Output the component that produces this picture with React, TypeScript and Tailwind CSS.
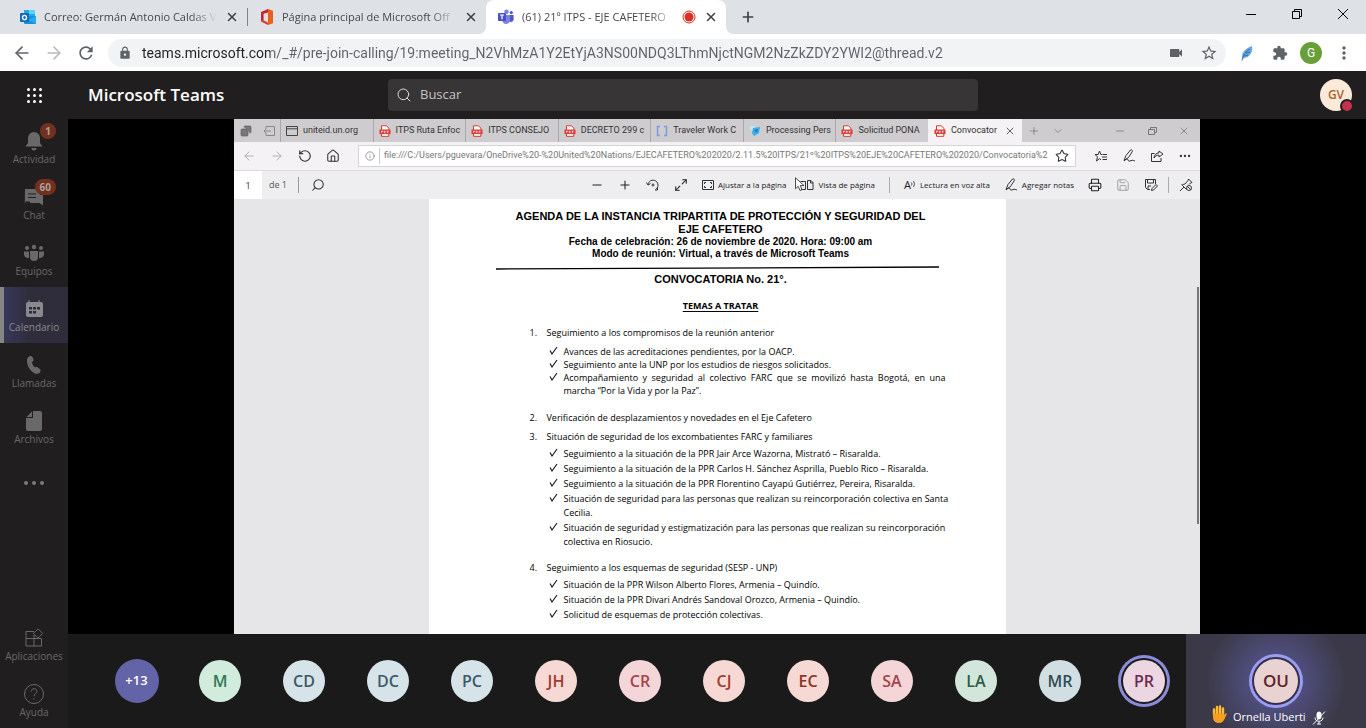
import { ReactNode } from 'react';
import {
  ArrowLeft,
  ArrowRight,
  ChevronDown,
  Copy,
  Ellipsis,
  House,
  Info,
  Maximize2,
  Minus,
  Plus,
  Printer,
  RotateCw,
  Save,
  Search,
  Star,
  X,
} from 'lucide-react';
import { MdExtension, MdLock, MdMoreVert, MdRefresh, MdStarBorder, MdVideocam } from 'react-icons/md';

const edgeTabs = [
  { title: 'uniteid.un.org', icon: 'page' },
  { title: 'ITPS Ruta Enfoc', icon: 'pdf' },
  { title: 'ITPS CONSEJO', icon: 'pdf' },
  { title: 'DECRETO 299 c', icon: 'pdf' },
  { title: 'Traveler Work C', icon: 'brackets' },
  { title: 'Processing Pers', icon: 'blue' },
  { title: 'Solicitud PONA', icon: 'pdf' },
];

const participants = [
  { initials: 'M', color: 'bg-[#d1ebdd] text-[#2f7a55]' },
  { initials: 'CD', color: 'bg-[#d6e3e8] text-[#3b5a66]' },
  { initials: 'DC', color: 'bg-[#d6e3e8] text-[#3b5a66]' },
  { initials: 'PC', color: 'bg-[#d6e3e8] text-[#3b5a66]' },
  { initials: 'JH', color: 'bg-[#f6d9d5] text-[#a33a2c]' },
  { initials: 'CR', color: 'bg-[#f4d6d8] text-[#a6434c]' },
  { initials: 'CJ', color: 'bg-[#f6d9d5] text-[#a33a2c]' },
  { initials: 'EC', color: 'bg-[#f6d9d5] text-[#8f3325]' },
  { initials: 'SA', color: 'bg-[#f4d6d8] text-[#a6434c]' },
  { initials: 'LA', color: 'bg-[#d3e6dc] text-[#2e5c48]' },
  { initials: 'MR', color: 'bg-[#d2dfe2] text-[#2f4d55]' },
];

const topics = [
  {
    title: 'Seguimiento a los compromisos de la reunión anterior',
    points: [
      'Avances de las acreditaciones pendientes, por la OACP.',
      'Seguimiento ante la UNP por los estudios de riesgos solicitados.',
      'Acompañamiento y seguridad al colectivo FARC que se movilizó hasta Bogotá, en una marcha “Por la Vida y por la Paz”.',
    ],
    dense: true,
    space: 'mt-3.5',
  },
  {
    title: 'Verificación de desplazamientos y novedades en el Eje Cafetero',
    points: [],
    space: 'mt-3.5',
  },
  {
    title: 'Situación de seguridad de los excombatientes FARC y familiares',
    points: [
      'Seguimiento a la situación de la PPR Jair Arce Wazorna, Mistrató – Risaralda.',
      'Seguimiento a la situación de la PPR Carlos H. Sánchez Asprilla, Pueblo Rico – Risaralda.',
      'Seguimiento a la situación de la PPR Florentino Cayapú Gutiérrez, Pereira, Risaralda.',
      'Situación de seguridad para las personas que realizan su reincorporación colectiva en Santa Cecilia.',
      'Situación de seguridad y estigmatización para las personas que realizan su reincorporación colectiva en Riosucio.',
    ],
    space: 'mt-1.5',
  },
  {
    title: 'Seguimiento a los esquemas de seguridad (SESP - UNP)',
    points: [
      'Situación de la PPR Wilson Alberto Flores, Armenia – Quindío.',
      'Situación de la PPR Divari Andrés Sandoval Orozco, Armenia – Quindío.',
      'Solicitud de esquemas de protección colectivas.',
    ],
    space: 'mt-3',
  },
];

const OutlookIcon = () => (
  <svg viewBox="0 0 16 16" className="size-4 shrink-0">
    <path d="M4 1h11v6H4z" fill="#28a8ea" />
    <path d="M9 1h6v4H9z" fill="#50d9ff" />
    <path d="M4 7h12v8H5a1 1 0 0 1-1-1z" fill="#1490df" />
    <path d="M16 7v8l-8-4z" fill="#28a8ea" />
    <rect y="4" width="9" height="9" rx="1" fill="#0f6cbd" />
    <ellipse cx="4.5" cy="8.5" rx="2" ry="2.2" fill="none" stroke="#fff" strokeWidth="1.3" />
  </svg>
);

const OfficeIcon = () => (
  <svg viewBox="0 0 14 16" className="h-4 w-3.5 shrink-0">
    <path d="M8 0L1 3v9.500l2.600-1.300V4.800L8 3.600z" fill="#c9242b" />
    <path d="M1 12.500L8 16v-2.200l-4.400-2.600z" fill="#d93a20" />
    <path d="M8 0l5 1.700v12.600L8 16z" fill="#e8601c" />
  </svg>
);

const TeamsIcon = () => (
  <svg viewBox="0 0 16 16" className="size-4 shrink-0">
    <circle cx="8.5" cy="2.8" r="2.3" fill="#7b83eb" />
    <circle cx="13.3" cy="3.6" r="1.6" fill="#5059c9" />
    <path d="M11 6h4.6v4.5a2.5 2.5 0 0 1-4.6 1.3z" fill="#5059c9" />
    <path d="M4.500 6h7.500v6a4 4 0 0 1-7.500.8z" fill="#7b83eb" />
    <rect y="4" width="8" height="8" rx=".8" fill="#4b53bc" />
    <path d="M2 6h4M4 6v4.300" stroke="#fff" strokeWidth="1.200" />
  </svg>
);

const PdfIcon = () => (
  <svg viewBox="0 0 12 12" className="size-3 shrink-0">
    <path d="M2.500 5V.8h5l2.300 2.400V5M2.500 9v2.300h7.300V9" fill="#fff" stroke="#d33a35" />
    <rect x=".5" y="4.500" width="11" height="4.600" fill="#dc3b36" />
    <path d="M2.500 7.800V6h1.200v1M5.300 6v1.700h.8l.5-.8-.5-.8zM8.300 7.900V6H9.800M8.300 7h1.200" fill="none" stroke="#fff" strokeWidth=".6" />
  </svg>
);

const TabIcon = ({ type }: { type: string }) => {
  if (type === 'pdf') return <PdfIcon />;
  return (
    <svg viewBox="0 0 12 12" className="size-3 shrink-0" fill="none">
      {type === 'page' && <path d="M.5 1.500h11v9H.5zM.5 3.800h11" stroke="#444" />}
      {type === 'brackets' && <path d="M4 1.500H1.500v9H4M8 1.500h2.500v9H8" stroke="#7c9be0" strokeWidth="1.500" />}
      {type === 'blue' && (
        <>
          <path d="M1 1h5v4H1z" fill="#bfe6f7" />
          <path d="M4 3l7-1-1 6-5 3-2-3z" fill="#3aaee6" />
          <path d="M5 5l4-1-1 4z" fill="#1580c4" />
        </>
      )}
    </svg>
  );
};

const PenIcon = () => (
  <svg viewBox="0 0 14 14" className="size-3.5 shrink-0" fill="none" stroke="#333">
    <path d="M2 11.500L4 6.500 8.500 1c.8-.6 2.400.4 1.800 1.500L6.500 8.500z M2 12c2-2 4-2.500 4-1.200s1.500 1.700 3 .8 3 .2 4 .4" />
  </svg>
);

const ChromeTab = ({ icon, title }: { icon: ReactNode; title: string }) => (
  <>
    {icon}
    <span className="flex-1 whitespace-nowrap mask-r-from-85% mask-r-to-100%">{title}</span>
  </>
);

const CloseTab = () => (
  <button aria-label="Cerrar pestaña" className="shrink-0">
    <X className="size-3.5 text-[#3c4043]" strokeWidth={2.5} />
  </button>
);

const ChromeBar = () => (
  <header className="bg-[#dee1e6] text-[#45494d]">
    <div className="flex h-[34px] text-[11px]">
      <div className="flex w-[247px] items-center gap-2 pr-2 pl-5">
        <ChromeTab icon={<OutlookIcon />} title="Correo: Germán Antonio Caldas V" />
        <CloseTab />
      </div>
      <div className="my-2 w-px bg-[#808388]" />
      <div className="flex w-[238px] items-center gap-2 pr-2 pl-3">
        <ChromeTab icon={<OfficeIcon />} title="Página principal de Microsoft Off" />
        <CloseTab />
      </div>
      <div className="relative flex w-60 items-center gap-2 rounded-t-lg bg-white pr-2 pl-3">
        <span className="absolute bottom-0 -left-2 size-2 bg-[radial-gradient(circle_at_0_0,transparent_8px,#fff_8px)]" />
        <span className="absolute -right-2 bottom-0 size-2 bg-[radial-gradient(circle_at_100%_0,transparent_8px,#fff_8px)]" />
        <ChromeTab icon={<TeamsIcon />} title="(61) 21º ITPS - EJE CAFETERO" />
        <svg viewBox="0 0 14 14" className="size-3.5 shrink-0">
          <circle cx="7" cy="7" r="6" fill="#fff" stroke="#d93025" />
          <circle cx="7" cy="7" r="4.500" fill="#d93025" />
        </svg>
        <CloseTab />
      </div>
      <button aria-label="Nueva pestaña" className="ml-3.5">
        <Plus className="size-4 text-[#3c4043]" strokeWidth={2.5} />
      </button>
      <div className="ml-auto flex h-7 text-black">
        <button aria-label="Minimizar" className="flex w-[46px] items-center justify-center">
          <svg viewBox="0 0 10 10" className="size-2.5"><path d="M0 5.500h10" stroke="currentColor" /></svg>
        </button>
        <button aria-label="Restaurar" className="flex w-[46px] items-center justify-center">
          <svg viewBox="0 0 10 10" className="size-2.5" fill="none" stroke="currentColor"><path d="M.5 2.500h7v7h-7zM2.500 2.500v-2h7v7h-2" /></svg>
        </button>
        <button aria-label="Cerrar" className="flex w-[46px] items-center justify-center">
          <svg viewBox="0 0 10 10" className="size-2.5"><path d="M0 0l10 10M10 0L0 10" stroke="currentColor" /></svg>
        </button>
      </div>
    </div>
    <div className="flex h-[37px] items-center bg-white px-3 text-[#5f6368]">
      <button aria-label="Atrás" className="mr-3"><ArrowLeft className="size-5" /></button>
      <button aria-label="Adelante" className="mr-3"><ArrowRight className="size-5 text-[#b9bbbe]" /></button>
      <button aria-label="Recargar" className="mr-3"><MdRefresh className="size-5" /></button>
      <div className="flex h-7 flex-1 items-center rounded-full bg-[#f1f3f4] pr-2 pl-2.5">
        <MdLock className="mr-2.5 size-3.5" />
        <input
          aria-label="Dirección"
          defaultValue="teams.microsoft.com/_#/pre-join-calling/19:meeting_N2VhMzA1Y2EtYjA3NS00NDQ3LThmNjctNGM2NzZkZDY2YWI2@thread.v2"
          className="min-w-0 flex-1 bg-[linear-gradient(to_right,#202124_128px,#5f6368_128px)] bg-clip-text font-['Roboto',sans-serif] text-sm text-transparent outline-none"
        />
        <MdVideocam className="mr-4 size-4" />
        <MdStarBorder className="size-[18px]" />
      </div>
      <svg viewBox="0 0 14 16" className="ml-3.5 h-4 w-3.5">
        <path d="M3 14C0 9 5 3 12 1c1 5-1 11-8 12z" fill="#6aa9d9" />
        <path d="M2 15.500C3 10 6 6 10 4M4 11l4-1M6 8l4-1" stroke="#2f6fae" fill="none" />
      </svg>
      <MdExtension className="ml-[18px] size-4" />
      <span className="ml-3 flex size-[22px] items-center justify-center rounded-full bg-[#689f38] font-['Roboto',sans-serif] text-xs text-white">G</span>
      <button aria-label="Menú" className="ml-3"><MdMoreVert className="size-5" /></button>
    </div>
  </header>
);

const TeamsHeader = () => (
  <div className="flex h-12 items-center bg-[#201e1f]">
    <button aria-label="Aplicaciones de Microsoft 365" className="grid w-[68px] grid-cols-[repeat(3,3px)] justify-center gap-[3px]">
      {Array.from({ length: 9 }, (_, i) => (
        <span key={i} className="size-[3px] rounded-full bg-white" />
      ))}
    </button>
    <h1 className="w-[320px] pl-5 text-[17px] font-semibold text-white">Microsoft Teams</h1>
    <label className="flex h-8 w-[590px] items-center gap-2 rounded-sm bg-[#373536] px-2">
      <Search className="size-4 text-[#dedede]" strokeWidth={1.5} />
      <input aria-label="Buscar" placeholder="Buscar" className="flex-1 bg-transparent text-[13px] outline-none placeholder:text-[#c4c3c3]" />
    </label>
    <div className="relative mr-3.5 ml-auto flex size-8 items-center justify-center rounded-full bg-[#fde9d9] text-xs font-semibold text-[#a0672f]">
      GV
      <span className="absolute -right-0.5 -bottom-0.5 size-3.5 rounded-full border-2 border-[#201e1f] bg-[#c4314b]" />
    </div>
  </div>
);

const SideItem = ({ label, badge, active, children }: { label: string; badge?: string; active?: boolean; children: ReactNode }) => (
  <a
    href="#"
    className={
      active
        ? 'flex h-14 flex-col items-center border-l-4 border-[#858585] bg-[linear-gradient(to_right,#37375a,#2f2d3b_40%)] pt-3 pr-1 text-[#8a8a8d]'
        : 'flex h-14 flex-col items-center pt-3 text-[#6a696a]'
    }
  >
    <span className="relative">
      <svg viewBox="0 0 20 20" className="size-5" fill="currentColor">{children}</svg>
      {badge && (
        <span className="absolute -top-2 -right-3 rounded-full bg-[#74301f] px-[5px] text-[10px] leading-4 font-bold text-[#a9a09e]">
          {badge}
        </span>
      )}
    </span>
    <span className="text-[10px] leading-4">{label}</span>
  </a>
);

const Sidebar = () => (
  <nav className="flex w-[68px] shrink-0 flex-col bg-[#201e1f]">
    <SideItem label="Actividad" badge="1">
      <path d="M10 1a6 6 0 0 1 6 6v5l2.500 3.500h-17L4 12V7a6 6 0 0 1 6-6zM7.500 17h5a2.500 2.500 0 0 1-5 0z" />
    </SideItem>
    <SideItem label="Chat" badge="60">
      <path d="M1 2h14a1 1 0 0 1 1 1v5h3v10.500L15.500 16H6v-1.500H1.500L.8 17z" />
      <path d="M4 7h8M4 10.500h8" stroke="#201e1f" />
    </SideItem>
    <SideItem label="Equipos">
      <circle cx="3" cy="5" r="2" />
      <circle cx="10" cy="4" r="2.2" />
      <circle cx="17" cy="5" r="2" />
      <path d="M0 8.500h5v6.800C1.500 15 0 13.500 0 11zM15 8.500h5V11c0 2.500-1.500 4-5 4.300z" />
      <path d="M6 8h8v6a4 4 0 0 1-8 0z" />
    </SideItem>
    <SideItem label="Calendario" active>
      <path d="M4.500 1h1v2h9V1h1v2h1.500a2 2 0 0 1 2 2v11a2 2 0 0 1-2 2H4a2 2 0 0 1-2-2V5a2 2 0 0 1 2-2h.5z" />
      <path d="M5 8h3v2.500H5zM9 8h3v2.500H9zM13 8h3v2.500h-3zM5 12h3v2.500H5zM9 12h3v2.500H9z" fill="#2f2d3b" />
    </SideItem>
    <SideItem label="Llamadas">
      <path d="M5.500 1.200c1.500-.6 2.800 0 3.300 1.300l.6 1.800c.3 1-.1 1.800-1.500 3 .4 2 1.500 3.800 3 5.200 1.700-.7 2.500-.5 3.300.2l1.800 1.500c.9.9.8 2-.2 3.200-1.300 1.700-3.500 2-6 .5C5.500 15 3 10.500 3 5.800c0-2.400.8-4 2.500-4.600z" />
    </SideItem>
    <SideItem label="Archivos">
      <path d="M9 0h7a2 2 0 0 1 2 2v16a2 2 0 0 1-2 2H4a2 2 0 0 1-2-2V7h7zM8 .5V6H2.500z" />
    </SideItem>
    <button aria-label="Más aplicaciones" className="flex h-14 items-center justify-center gap-1">
      <span className="size-1 rounded-full bg-[#7a797a]" />
      <span className="size-1 rounded-full bg-[#7a797a]" />
      <span className="size-1 rounded-full bg-[#7a797a]" />
    </button>
    <div className="mt-auto">
      <SideItem label="Aplicaciones">
        <path d="M10 3.500H2V18h15.500v-7.500H2M10 7V18M14 .8l4.700 4.700-4.700 4.700-4.700-4.700z" fill="none" stroke="currentColor" />
      </SideItem>
      <SideItem label="Ayuda">
        <circle cx="10" cy="10" r="9.5" fill="none" stroke="currentColor" />
        <path d="M7.300 7.500c0-1.800 1.200-2.800 2.800-2.800s2.700 1 2.700 2.500c0 2.300-2.700 2.300-2.700 5M10 14.200v1.500" fill="none" stroke="currentColor" />
      </SideItem>
    </div>
  </nav>
);

const EdgeChrome = () => (
  <div className="text-[9px] text-[#333]">
    <div className="flex h-[23px] bg-[#cfcccf] font-['Roboto',sans-serif]">
      <div className="flex w-[46px] items-center justify-around text-[#666]">
        <Copy className="size-3 -scale-x-100" fill="#777" strokeWidth={1.5} />
        <svg viewBox="0 0 12 12" className="size-3" fill="none" stroke="#888"><path d="M3 4V1.500h8.500v9H3V8M8 6H1M3 4L1 6l2 2" /></svg>
      </div>
      <div className="flex w-[648px]">
        {edgeTabs.map((tab) => (
          <div key={tab.title} className="flex flex-1 items-center gap-[5px] border-l border-[#a9a7a9] pl-[5px] whitespace-nowrap">
            <TabIcon type={tab.icon} />
            {tab.title}
          </div>
        ))}
      </div>
      <div className="flex w-[94px] items-center gap-[5px] bg-[#f4f2f4] px-1.5 whitespace-nowrap">
        <PdfIcon />
        <span className="flex-1">Convocator</span>
        <X className="size-3 shrink-0" strokeWidth={1.5} />
      </div>
      <div className="flex items-center gap-3 pl-1.5 text-[#777]">
        <Plus className="size-3" strokeWidth={1.5} />
        <ChevronDown className="size-3" strokeWidth={1.5} />
      </div>
      <div className="ml-auto flex items-center gap-5 pr-2.5 text-[#777]">
        <Minus className="size-3" strokeWidth={1.5} />
        <svg viewBox="0 0 12 12" className="size-3" fill="none" stroke="#777"><path d="M2.500 4.500h6v5h-6zM4.500 4.500v-2h6v5h-2" /></svg>
        <X className="size-3" strokeWidth={1.5} />
      </div>
    </div>
    <div className="flex h-7 items-center bg-[#f4f2f4] px-2">
      <ArrowLeft className="mr-3.5 size-3.5 text-[#aaa]" strokeWidth={1.5} />
      <ArrowRight className="mr-3.5 size-3.5 text-[#aaa]" strokeWidth={1.5} />
      <RotateCw className="mr-3.5 size-3.5 -scale-x-100" strokeWidth={2} />
      <House className="mr-4.5 size-3.5" strokeWidth={1.8} />
      <div className="flex h-[22px] min-w-0 flex-1 items-center border border-[#d5d3d5] bg-white px-1.5">
        <Info className="size-2.5 shrink-0 text-[#888]" strokeWidth={2} />
        <span className="mx-1 h-4 w-px bg-[#ccc]" />
        <input
          aria-label="Dirección del documento"
          defaultValue="file:///C:/Users/pguevara/OneDrive%20-%20United%20Nations/EJECAFETERO%202020/2.11.5%20ITPS/21º%20ITPS%20EJE%20CAFETERO%202020/Convocatoria%2"
          className="min-w-0 flex-1 bg-transparent font-['Roboto',sans-serif] text-[#777] outline-none"
        />
        <Star className="ml-1 size-3.5 shrink-0" strokeWidth={1.8} />
      </div>
      <div className="ml-4.5 flex items-center gap-3.5">
        <svg viewBox="0 0 14 14" className="size-3.5" fill="none" stroke="#333">
          <path d="M8 5.500H6.800L5.500 2 4.200 5.500H1l2.500 2.300L2.500 12l3-2.300L7 10.800M8.500 5.500H13M8 8h5M8.500 10.500H13" />
        </svg>
        <PenIcon />
        <svg viewBox="0 0 14 14" className="size-3.5" fill="none" stroke="#333">
          <path d="M4.500 4.500h-3v8h9.500V9M9 2l4 3-4 3V6.200C6.500 6 5 7.200 4 9c.2-3 2-5 5-5.200z" />
        </svg>
        <Ellipsis className="size-3.5" strokeWidth={2} />
      </div>
    </div>
    <div className="relative flex h-[29px] items-center border-t border-[#dcdadc] bg-[#eeedf0] pr-[7px]">
      <input aria-label="Página" defaultValue="1" className="h-full w-7 bg-white text-center outline-none" />
      <span className="w-8 text-center text-[#555]">de 1</span>
      <span className="ml-1 h-4 w-px bg-[#999]" />
      <Search className="ml-3 size-3.5 -scale-x-100" strokeWidth={1.8} />
      <div className="ml-auto flex items-center gap-3.5 text-[8px] text-[#222]">
        <button aria-label="Alejar"><Minus className="size-3.5" strokeWidth={1.8} /></button>
        <button aria-label="Acercar"><Plus className="size-3.5" strokeWidth={1.8} /></button>
        <button aria-label="Girar">
          <svg viewBox="0 0 14 14" className="size-3.5" fill="none" stroke="#333"><path d="M2 7A5 5 0 1 1 9.500 11.500M.5 4.500L2 7l2.500-1.500M11.500 9v3H9" /><circle cx="7" cy="7" r="1" /></svg>
        </button>
        <button aria-label="Ampliar"><Maximize2 className="size-3.5" strokeWidth={1.8} /></button>
        <button className="flex items-center gap-1">
          <svg viewBox="0 0 12 10" className="h-2.5 w-3" fill="none" stroke="#333"><path d="M.5.5h11v9H.5zM2.500 4V2.500H4M8 2.500h1.500V4M9.500 6v1.500H8M4 7.500H2.500V6" /></svg>
          Ajustar a la página
        </button>
        <button className="flex items-center gap-1">
          <svg viewBox="0 0 14 12" className="h-3 w-3.5" fill="none" stroke="#333"><path d="M.5 2.500h5v8h-5M7.500 1.500h3.500l2 2v7H7.500zM10.500 1.500V4H13" /></svg>
          Vista de página
        </button>
        <span className="h-4 w-px bg-[#aaa]" />
        <button className="flex items-center gap-1">
          <span className="flex items-center" aria-hidden="true">
            <span className="text-[11px] leading-3">A</span>
            <svg viewBox="0 0 5 10" className="h-2.5 w-[5px]" fill="none" stroke="#333" strokeWidth=".8"><path d="M.5 2.500q1 1.500 0 3M2.500 1q2 3 0 6" /></svg>
          </span>
          Lectura en voz alta
        </button>
        <button className="flex items-center gap-1">
          <PenIcon />
          Agregar notas
        </button>
        <button aria-label="Imprimir"><Printer className="size-3.5" strokeWidth={1.8} /></button>
        <button aria-label="Guardar"><Save className="size-3.5 text-[#999]" strokeWidth={1.5} /></button>
        <button aria-label="Guardar como">
          <svg viewBox="0 0 14 14" className="size-3.5" fill="none" stroke="#333">
            <path d="M6 11.500H3.500l-2-2v-8h10V6M3.500 1.500V5h6V1.500M4 11V8h3M7.500 12.500l.5-2L12 6.500 13.500 8l-4 4z" />
          </svg>
        </button>
        <span className="-mx-1 h-4 w-px bg-[#aaa]" />
        <button aria-label="Desanclar">
          <svg viewBox="0 0 14 14" className="size-3.5" fill="none" stroke="#333">
            <path d="M1 13l4-4M2.500 6.500l5 5M3.500 6.500L6 6l3-3.500L9.500 1 13 4.500 11.500 5 10 6.500" />
            <circle cx="10" cy="10" r="2.5" />
            <path d="M8.300 8.300l3.500 3.500" />
          </svg>
        </button>
      </div>
      <svg viewBox="0 0 10 15" className="absolute top-1.5 left-[561px] h-[15px] w-2.5">
        <path d="M.5.8v11l2.700-2.500 1.800 4.200 2-.9-1.800-4H9z" fill="#fff" stroke="#222" strokeWidth=".8" />
      </svg>
    </div>
  </div>
);

const AgendaPage = () => (
  <article className="mx-auto w-[577px] bg-white pt-[11px] pr-[60px] pb-3 pl-[67px] text-black">
    <header className="text-center font-['Liberation_Sans',Arial,sans-serif] font-bold">
      <h2 className="text-[11px] leading-[13px]">
        AGENDA DE LA INSTANCIA TRIPARTITA DE PROTECCIÓN Y SEGURIDAD DEL
        <br />
        EJE CAFETERO
      </h2>
      <p className="text-[10px] leading-3">Fecha de celebración: 26 de noviembre de 2020. Hora: 09:00 am</p>
      <p className="text-[10px] leading-3">Modo de reunión: Virtual, a través de Microsoft Teams</p>
      <svg viewBox="0 0 443 4" className="mt-1.5 h-1 w-[443px]"><path d="M0 3L443 1" stroke="#000" strokeWidth="1.3" /></svg>
      <p className="mt-[3px] text-[11px] leading-[13px]">CONVOCATORIA No. 21°.</p>
    </header>
    <div className="text-[9px] leading-[13px]">
      <h3 className="mt-[13px] text-center font-bold underline underline-offset-2">TEMAS A TRATAR</h3>
      <ol className="pl-[34px]">
        {topics.map((topic, index) => (
          <li key={topic.title} className={topic.space}>
            <div className="flex">
              <span className="w-[17px]">{index + 1}.</span>
              <span>{topic.title}</span>
            </div>
            {topic.points.length > 0 && (
              <ul className={topic.dense ? 'mt-1.5 flex flex-col leading-[13px]' : 'mt-1 flex flex-col gap-px leading-[14px]'}>
                {topic.points.map((point) => (
                  <li key={point} className="flex pl-[19px]">
                    <svg viewBox="0 0 9 12" className="mr-1.5 h-3 w-[9px] shrink-0" fill="none" stroke="#111">
                      <path d="M1 5.500l2 3.500L8 2" strokeWidth="1.1" />
                    </svg>
                    <span className={topic.dense ? 'text-justify' : '-mr-1'}>{point}</span>
                  </li>
                ))}
              </ul>
            )}
          </li>
        ))}
      </ol>
    </div>
  </article>
);

const Participants = () => (
  <div className="flex h-[94px] items-stretch justify-end bg-[#1b1a1b] font-semibold">
    <div className="flex w-[83px] items-center justify-center">
      <button className="size-11 rounded-full bg-[#6264a7] text-[13px] text-white">+13</button>
    </div>
    {participants.map((person, index) => (
      <div key={index} className="flex w-[84px] items-center justify-center">
        <span className={`flex size-[42px] items-center justify-center rounded-full text-base ${person.color}`}>{person.initials}</span>
      </div>
    ))}
    <div className="flex w-[84px] items-center justify-center">
      <span className="flex size-[42px] items-center justify-center rounded-full bg-[#ecd6e2] text-base text-[#6b2b50] ring-3 ring-[#8b8cd9] ring-offset-2 ring-offset-[#1b1a1b]">
        PR
      </span>
    </div>
    <div className="relative flex w-[180px] items-center justify-center bg-[radial-gradient(circle_at_50%_50%,#504f80_24px,#3b3947_70px)]">
      <span className="flex size-11 items-center justify-center rounded-full bg-[#e9d2d2] text-[17px] text-[#5e2428] ring-3 ring-[#9c9cf5] ring-offset-2 ring-offset-[#33314a]">
        OU
      </span>
      <div className="absolute bottom-[3px] left-[25px] flex items-end gap-1.5 text-[11px] leading-4 font-normal text-white">
        <svg viewBox="0 0 16 18" className="mb-0.5 h-[18px] w-4">
          <path d="M3 10V4.500M6 9V2M9 9V1.500M12 10V3.500" stroke="#fbbd35" strokeWidth="2.4" strokeLinecap="round" />
          <path d="M2 8.500h11l.5 1.500 1-1.500c1-.6 1.500.4 1 1.300L13 15c-1 2-2.500 3-5 3-4 0-6-2.500-6-6z" fill="#f79f1f" />
          <path d="M4.500 4v5M7.500 3v6M10.500 3.500V9" stroke="#c9751a" strokeWidth=".5" />
        </svg>
        <span>Ornella Uberti</span>
        <svg viewBox="0 0 14 14" className="size-3.5" fill="none" stroke="#fff">
          <rect x="5" y="1" width="4" height="7" rx="2" fill="#fff" />
          <path d="M3 6.500c0 2.300 1.600 3.800 4 3.800s4-1.500 4-3.800M7 10.500V13M5 13h4M1 13.500L13 .5" />
        </svg>
      </div>
    </div>
  </div>
);

const App = () => {
  return (
    <div className="flex h-screen flex-col overflow-hidden bg-black font-['Open_Sans','Noto_Sans',sans-serif]">
      <ChromeBar />
      <TeamsHeader />
      <div className="flex min-h-0 flex-1">
        <Sidebar />
        <main className="flex min-w-0 flex-1 flex-col">
          <section className="flex min-h-0 flex-1 flex-col px-[166px]">
            <EdgeChrome />
            <div className="relative min-h-0 flex-1 overflow-hidden bg-[#e6e6e8]">
              <AgendaPage />
              <span className="absolute top-[88px] right-px h-[237px] w-0.5 bg-[#77767a]" />
            </div>
          </section>
          <Participants />
        </main>
      </div>
    </div>
  );
};

export default App;
